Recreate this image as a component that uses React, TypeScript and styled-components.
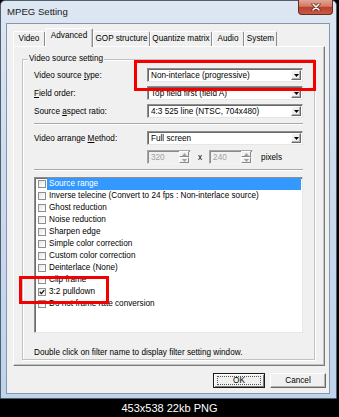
import React from 'react';
import styled, { createGlobalStyle } from 'styled-components';

const GlobalStyle = createGlobalStyle`
  html, body {
    margin: 0;
    padding: 0;
    background: #000;
  }
  body {
    width: 339px;
    height: 417px;
    overflow: hidden;
    font-family: 'Liberation Sans', Arial, sans-serif;
  }
`;

const Screen = styled.div`
  width: 339px;
  height: 417px;
  background: #000;
  display: flex;
  flex-direction: column;
`;

const Window = styled.div`
  position: relative;
  box-sizing: border-box;
  width: 337px;
  height: 399px;
  border: 1px solid #505e72;
  border-radius: 5px 5px 0 0;
  background: linear-gradient(180deg, #dde7f2 0%, #cddced 40%, #bfd3ea 100%);
  padding: 0 6px 4px 5px;
  display: flex;
  flex-direction: column;
`;

const TitleBar = styled.div`
  height: 22px;
  display: flex;
  align-items: flex-start;
  justify-content: space-between;
`;

const Title = styled.span`
  margin: 5px 0 0 1px;
  font-size: 9.6px;
  line-height: 12px;
  color: #1a1a1a;
`;

const CloseButton = styled.div`
  box-sizing: border-box;
  width: 35px;
  height: 15px;
  margin: -1px -3px 0 0;
  border: 1px solid #6a2a22;
  border-top: none;
  border-radius: 0 0 4px 4px;
  background: linear-gradient(180deg, #e4a595 0%, #d07a66 45%, #b8402c 52%, #c95a44 100%);
  display: flex;
  align-items: center;
  justify-content: center;
`;

const Client = styled.div`
  flex: 1;
  box-sizing: border-box;
  background: #f0f0f0;
  border: 1px solid #8497af;
  padding: 4px 0 0 6px;
  display: flex;
  flex-direction: column;
`;

const TabStrip = styled.div`
  height: 18px;
  display: flex;
  align-items: flex-end;
`;

const Tab = styled.div<{ $w: number; $active?: boolean }>`
  box-sizing: border-box;
  width: ${p => p.$w}px;
  height: ${p => (p.$active ? 19 : 15)}px;
  margin-bottom: ${p => (p.$active ? -1 : 0)}px;
  position: relative;
  z-index: ${p => (p.$active ? 2 : 1)};
  background: #f0f0f0;
  border: 1px solid #fff;
  border-bottom: none;
  border-right: 1px solid #8a8a8a;
  border-radius: 2px 2px 0 0;
  box-shadow: ${p => (p.$active ? 'inset -1px 0 0 #c8c8c8' : 'none')};
  font-size: 8.2px;
  line-height: ${p => (p.$active ? 14 : 13)}px;
  text-align: center;
  color: #000;
  white-space: nowrap;
`;

const Panel = styled.div`
  box-sizing: border-box;
  width: 312px;
  height: 320px;
  border: 1px solid;
  border-color: #fff #7a7a7a #7a7a7a #fff;
  box-shadow: inset -1px -1px 0 #c4c4c4;
  padding: 12px 0 0 8px;
`;

const Group = styled.div`
  position: relative;
  box-sizing: border-box;
  width: 293px;
  height: 301px;
  border: 1px solid #c2c2c2;
  box-shadow: 1px 1px 0 #fff, inset 1px 1px 0 #fff;
  padding: 8px 11px 0 11px;
  display: flex;
  flex-direction: column;
`;

const Legend = styled.span`
  position: absolute;
  top: -6px;
  left: 5px;
  padding: 0 1px;
  background: #f0f0f0;
  font-size: 8.2px;
  line-height: 10px;
  color: #000;
`;

const Row = styled.div<{ $top?: number }>`
  height: 14px;
  margin-top: ${p => p.$top ?? 0}px;
  display: flex;
  align-items: center;
`;

const Label = styled.span`
  width: 113px;
  font-size: 8.2px;
  color: #000;
  white-space: nowrap;
  u {
    text-decoration: underline;
  }
`;

const Combo = styled.div`
  box-sizing: border-box;
  width: 156px;
  height: 14px;
  background: #fff;
  border: 1px solid;
  border-color: #8e8e8e #e6e6e6 #e6e6e6 #8e8e8e;
  box-shadow: inset 1px 1px 0 #6a6a6a;
  display: flex;
  align-items: center;
  padding: 0 1px 0 3px;
  font-size: 8.2px;
  color: #000;
  white-space: nowrap;
`;

const ComboText = styled.span`
  flex: 1;
  overflow: hidden;
`;

const ArrowButton = styled.div`
  box-sizing: border-box;
  width: 10px;
  height: 10px;
  background: #f0f0f0;
  border: 1px solid;
  border-color: #fff #6a6a6a #6a6a6a #fff;
  box-shadow: inset -1px -1px 0 #b0b0b0;
  display: flex;
  align-items: center;
  justify-content: center;
`;

const Separator = styled.div<{ $top: number; $bottom: number }>`
  height: 0;
  border-top: 1px solid #a8a8a8;
  border-bottom: 1px solid #fff;
  margin: ${p => p.$top}px 0 ${p => p.$bottom}px;
`;

const Spin = styled.div<{ $w: number; $left?: number }>`
  box-sizing: border-box;
  width: ${p => p.$w}px;
  height: 14px;
  margin-left: ${p => p.$left ?? 0}px;
  background: #f0f0f0;
  border: 1px solid;
  border-color: #a8a8a8 #f4f4f4 #f4f4f4 #a8a8a8;
  box-shadow: inset 1px 1px 0 #8a8a8a;
  display: flex;
  align-items: center;
  padding: 0 1px 0 3px;
  font-size: 8.2px;
  color: #a0a0a0;
`;

const SpinButtons = styled.div`
  width: 10px;
  height: 12px;
  display: flex;
  flex-direction: column;
`;

const SpinHalf = styled.div`
  box-sizing: border-box;
  flex: 1;
  background: #f0f0f0;
  border: 1px solid;
  border-color: #fff #8a8a8a #8a8a8a #fff;
  display: flex;
  align-items: center;
  justify-content: center;
`;

const Plain = styled.span<{ $left: number }>`
  margin-left: ${p => p.$left}px;
  font-size: 8.2px;
  color: #000;
`;

const FilterList = styled.div`
  box-sizing: border-box;
  height: 156px;
  background: #fff;
  border: 1px solid;
  border-color: #8e8e8e #e8e8e8 #e8e8e8 #8e8e8e;
  box-shadow: inset 1px 1px 0 #6c6c6c;
  padding: 0 1px 0 2px;
`;

const Item = styled.div`
  height: 12px;
  display: flex;
  align-items: center;
`;

const CheckBox = styled.div`
  box-sizing: border-box;
  width: 8px;
  height: 8px;
  margin-left: 1px;
  border: 1px solid #8e8e8e;
  background: linear-gradient(135deg, #e6e6e6, #fff);
  display: flex;
  align-items: center;
  justify-content: center;
`;

const ItemText = styled.span<{ $selected?: boolean }>`
  flex: 1;
  height: 12px;
  margin-left: 1px;
  padding-left: 2px;
  line-height: 12px;
  font-size: 8.2px;
  white-space: nowrap;
  color: ${p => (p.$selected ? '#fff' : '#000')};
  background: ${p => (p.$selected ? '#3399ff' : 'transparent')};
`;

const Hint = styled.div`
  margin-top: 15px;
  font-size: 8.2px;
  line-height: 10px;
  color: #000;
  white-space: nowrap;
`;

const ButtonRow = styled.div`
  margin-top: 7px;
  padding-right: 3px;
  display: flex;
  justify-content: flex-end;
  gap: 5px;
`;

const Button = styled.div<{ $w: number; $default?: boolean }>`
  box-sizing: border-box;
  width: ${p => p.$w}px;
  height: 15px;
  background: #f0f0f0;
  border: 1px solid;
  border-color: ${p => (p.$default ? '#1a1a1a' : '#fff #6a6a6a #6a6a6a #fff')};
  box-shadow: ${p =>
    p.$default
      ? 'inset 1px 1px 0 #fff, inset -1px -1px 0 #7a7a7a'
      : 'inset -1px -1px 0 #b4b4b4'};
  display: flex;
  align-items: center;
  justify-content: center;
  font-size: 8.2px;
  color: #000;
`;

const FocusRing = styled.span`
  box-sizing: border-box;
  width: calc(100% - 6px);
  height: 9px;
  border: 1px dotted #555;
  display: flex;
  align-items: center;
  justify-content: center;
  line-height: 8px;
`;

const Annotation = styled.div<{ $x: number; $y: number; $w: number; $h: number }>`
  position: absolute;
  box-sizing: border-box;
  left: ${p => p.$x}px;
  top: ${p => p.$y}px;
  width: ${p => p.$w}px;
  height: ${p => p.$h}px;
  border: 3px solid #f40000;
  pointer-events: none;
`;

const Caption = styled.div`
  height: 18px;
  line-height: 18px;
  text-align: center;
  color: #fff;
  font-family: 'Liberation Sans', Arial, sans-serif;
  font-size: 11px;
`;

const DownArrow = ({ color = '#000' }: { color?: string }) => (
  <svg width="5" height="3" viewBox="0 0 5 3">
    <polygon points="0,0 5,0 2.5,3" fill={color} />
  </svg>
);

const UpArrow = ({ color = '#000' }: { color?: string }) => (
  <svg width="5" height="3" viewBox="0 0 5 3">
    <polygon points="0,3 5,3 2.5,0" fill={color} />
  </svg>
);

const CloseGlyph = () => (
  <svg width="10" height="8" viewBox="0 0 10 8">
    <path d="M2 1 L8 7 M8 1 L2 7" stroke="#5a1e16" strokeWidth="3" strokeLinecap="round" />
    <path d="M2 1 L8 7 M8 1 L2 7" stroke="#fff" strokeWidth="1.6" strokeLinecap="round" />
  </svg>
);

const CheckMark = () => (
  <svg width="6" height="6" viewBox="0 0 6 6">
    <polyline points="0.8,3 2.4,4.6 5.3,1.2" fill="none" stroke="#111" strokeWidth="1.3" />
  </svg>
);

const SpinBox = ({ value, left }: { value: string; left?: number }) => (
  <Spin $w={44} $left={left}>
    <ComboText>{value}</ComboText>
    <SpinButtons>
      <SpinHalf>
        <UpArrow color="#a0a0a0" />
      </SpinHalf>
      <SpinHalf>
        <DownArrow color="#a0a0a0" />
      </SpinHalf>
    </SpinButtons>
  </Spin>
);

const DropDown = ({ value }: { value: string }) => (
  <Combo>
    <ComboText>{value}</ComboText>
    <ArrowButton>
      <DownArrow />
    </ArrowButton>
  </Combo>
);

const tabs = [
  { name: 'Video', w: 32 },
  { name: 'Advanced', w: 48, active: true },
  { name: 'GOP structure', w: 57 },
  { name: 'Quantize matrix', w: 62 },
  { name: 'Audio', w: 32 },
  { name: 'System', w: 33 },
];

const filters = [
  { name: 'Source range', selected: true },
  { name: 'Inverse telecine (Convert to 24 fps : Non-interlace source)' },
  { name: 'Ghost reduction' },
  { name: 'Noise reduction' },
  { name: 'Sharpen edge' },
  { name: 'Simple color correction' },
  { name: 'Custom color correction' },
  { name: 'Deinterlace (None)' },
  { name: 'Clip frame' },
  { name: '3:2 pulldown', checked: true },
  { name: 'Do not frame rate conversion' },
];

const App: React.FC = () => {
  return (
    <Screen>
      <GlobalStyle />
      <Window>
        <TitleBar>
          <Title>MPEG Setting</Title>
          <CloseButton>
            <CloseGlyph />
          </CloseButton>
        </TitleBar>
        <Client>
          <TabStrip>
            {tabs.map(t => (
              <Tab key={t.name} $w={t.w} $active={t.active}>
                {t.name}
              </Tab>
            ))}
          </TabStrip>
          <Panel>
            <Group>
              <Legend>Video source setting</Legend>
              <Row>
                <Label>
                  Video source <u>t</u>ype:
                </Label>
                <DropDown value="Non-interlace (progressive)" />
              </Row>
              <Row $top={4}>
                <Label>
                  <u>F</u>ield order:
                </Label>
                <DropDown value="Top field first (field A)" />
              </Row>
              <Row $top={4}>
                <Label>
                  Source <u>a</u>spect ratio:
                </Label>
                <DropDown value="4:3 525 line (NTSC, 704x480)" />
              </Row>
              <Separator $top={5} $bottom={6} />
              <Row>
                <Label>
                  Video arrange <u>M</u>ethod:
                </Label>
                <DropDown value="Full screen" />
              </Row>
              <Row $top={5}>
                <Label />
                <SpinBox value="320" />
                <Plain $left={7}>x</Plain>
                <SpinBox value="240" left={7} />
                <Plain $left={8}>pixels</Plain>
              </Row>
              <Separator $top={5} $bottom={6} />
              <FilterList>
                {filters.map(f => (
                  <Item key={f.name}>
                    <CheckBox>{f.checked && <CheckMark />}</CheckBox>
                    <ItemText $selected={f.selected}>{f.name}</ItemText>
                  </Item>
                ))}
              </FilterList>
              <Hint>Double click on filter name to display filter setting window.</Hint>
            </Group>
          </Panel>
          <ButtonRow>
            <Button $w={52} $default>
              <FocusRing>OK</FocusRing>
            </Button>
            <Button $w={56}>Cancel</Button>
          </ButtonRow>
        </Client>
        <Annotation $x={133} $y={59} $w={182} $h={31} />
        <Annotation $x={18} $y={275} $w={90} $h={28} />
      </Window>
      <Caption>453x538 22kb PNG</Caption>
    </Screen>
  );
};

export default App;
